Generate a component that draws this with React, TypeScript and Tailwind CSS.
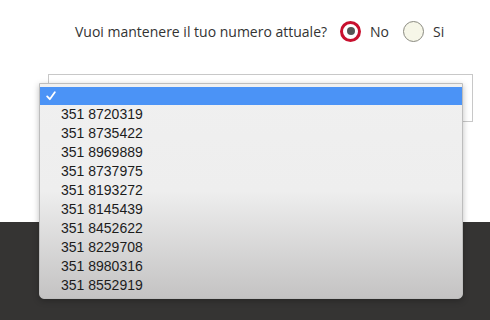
import React from 'react';

const numbers = [
  '351 8720319',
  '351 8735422',
  '351 8969889',
  '351 8737975',
  '351 8193272',
  '351 8145439',
  '351 8452622',
  '351 8229708',
  '351 8980316',
  '351 8552919',
];

export default function App() {
  return (
    <div className="relative w-[490px] h-[320px] overflow-hidden bg-white">
      {/* Question row */}
      <div className="flex items-center h-[62px] pl-[75px] font-['Open_Sans',sans-serif] text-[14px] text-[#333]">
        <span>Vuoi mantenere il tuo numero attuale?</span>
        <span className="ml-[13px] flex items-center justify-center w-[21px] h-[21px] rounded-full border-[3px] border-[#c8102e] bg-white">
          <span className="w-[8px] h-[8px] rounded-full bg-[#555]" />
        </span>
        <span className="ml-[9px]">No</span>
        <span className="ml-[14px] w-[21px] h-[21px] rounded-full border-[1.5px] border-[#8a8a80] bg-[#f6f6e8]" />
        <span className="ml-[9px]">Si</span>
      </div>

      {/* Select box */}
      <div className="ml-[48px] mt-[12px] w-[425px] h-[48px] border border-[#c8c8c8] bg-white" />

      {/* Dark footer band */}
      <div className="absolute left-0 right-0 top-[222px] bottom-0 bg-[#353433]" />

      {/* Open dropdown menu */}
      <div className="absolute left-[39px] top-[83px] w-[424px] h-[216px] rounded-b-[5px] border border-[#bdbdbd] bg-gradient-to-b from-[#f0f0f0] via-[#eeeeee] to-[#c4c3c3] shadow-[0_2px_6px_rgba(0,0,0,0.25)] pt-[3px] font-['Liberation_Sans',Arial,sans-serif] text-[14px] text-[#1c1c1c]">
        <div className="flex items-center h-[18px] bg-[#4b93f6] pl-[6px] text-white">
          <svg width="10" height="10" viewBox="0 0 10 10">
            <path d="M1.2 5.4 L3.8 8.2 L8.8 1.2" fill="none" stroke="white" strokeWidth="1.8" strokeLinecap="round" strokeLinejoin="round" />
          </svg>
        </div>
        <div>
          {numbers.map((n) => (
            <div key={n} className="h-[19px] leading-[19px] pl-[21px]">
              {n}
            </div>
          ))}
        </div>
      </div>
    </div>
  );
}
